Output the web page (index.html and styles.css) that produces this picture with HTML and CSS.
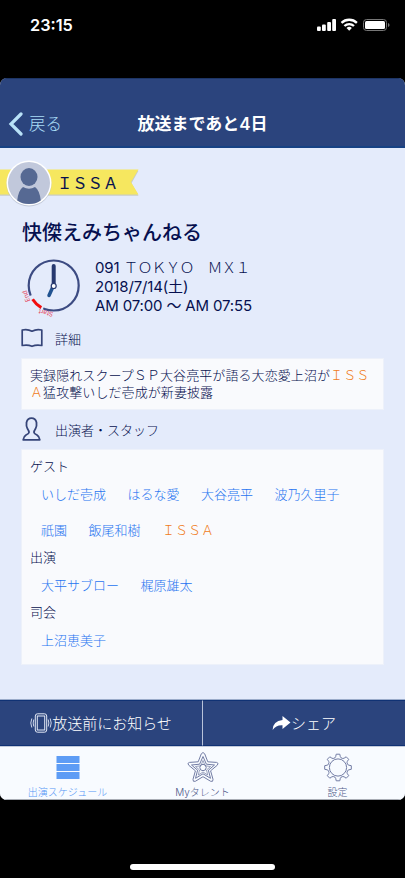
FILE: index.html
```html
<!DOCTYPE html>
<html lang="ja">
<head>
<meta charset="utf-8">
<title>放送まであと4日</title>
<link rel="stylesheet" href="styles.css">
</head>
<body>
<header class="status">
  <span class="time">23:15</span>
  <svg class="status-icons" width="74" height="16" viewBox="0 0 74 16">
    <g fill="#fff">
      <rect x="0" y="9.500" width="3.800" height="4.500" rx="1"/>
      <rect x="5" y="7.500" width="3.800" height="6.500" rx="1"/>
      <rect x="10.200" y="5" width="3.800" height="9" rx="1"/>
      <rect x="15.200" y="2" width="3.800" height="12" rx="1"/>
      <path d="M32.200 13.800l-2.700-2.900a4 4 0 0 1 5.400 0z"/>
    </g>
    <g fill="none" stroke="#fff" stroke-width="2.300">
      <path d="M24.500 5.900a11 11 0 0 1 15.400 0"/>
      <path d="M27.400 9a7 7 0 0 1 9.600 0"/>
    </g>
    <rect x="46.500" y="2.500" width="23" height="11" rx="3" fill="none" stroke="#777"/>
    <rect x="48" y="4" width="20" height="8" rx="1.500" fill="#fff"/>
    <path d="M71 6v4q1.600-.6 1.600-2t-1.600-2z" fill="#777"/>
  </svg>
</header>
<main class="app">
  <nav class="navbar">
    <a class="back">
      <svg width="15" height="24" viewBox="0 0 15 24"><path d="M13 2L3 12l10 10" fill="none" stroke="#b9e2f8" stroke-width="3.200" stroke-linecap="round"/></svg>
      <span>戻る</span>
    </a>
    <h1>放送まであと4日</h1>
  </nav>
  <section class="content">
    <div class="talent">
      <svg class="ribbon" width="142" height="30" viewBox="0 0 142 30"><path d="M0 2H138.500L131.500 14.500L138.500 27H0z" fill="#c9cdc4" transform="translate(0 .8)"/><path d="M0 1.500H138.500L131 14L138.500 26.500H0z" fill="#f6e75f"/></svg>
      <svg class="avatar" width="48" height="48" viewBox="0 0 48 48">
        <circle cx="24" cy="25" r="22.500" fill="#a9b0c2" opacity=".6"/>
        <circle cx="24" cy="24" r="22.500" fill="#fff"/>
        <circle cx="24" cy="24" r="21" fill="#c1c8db"/>
        <ellipse cx="24" cy="18" rx="8.500" ry="9" fill="#566993"/>
        <path d="M18 28q6 3.500 12 0q4.500 3 5.800 13.500q-5 3.500-11.800 3.500t-11.800-3.500Q13.500 31 18 28z" fill="#566993"/>
      </svg>
      <span class="talent-name">ＩＳＳＡ</span>
    </div>
    <h2>快傑えみちゃんねる</h2>
    <div class="schedule">
      <svg width="66" height="66" viewBox="0 0 66 66">
        <circle cx="34.700" cy="33.500" r="25" fill="none" stroke="#3c4b82" stroke-width="2.200"/>
        <path d="M11.800 43.500A25 25 0 0 0 24.300 56.200" fill="none" stroke="#e4ebfb" stroke-width="4"/>
        <path d="M13.600 47.200A25.500 25.500 0 0 0 22.300 55.600" fill="none" stroke="#f20d0d" stroke-width="3"/>
        <path d="M34.500 33.500L30 43.500" stroke="#215391" stroke-width="3.500" stroke-linecap="round"/>
        <path d="M34.700 33V14" stroke="#26386f" stroke-width="4" stroke-linecap="round"/>
        <circle cx="34.700" cy="34" r="2.500" fill="#fff" stroke="#26386f" stroke-width="1.200"/>
        <text class="mark" transform="translate(34.500 60.300) rotate(193)">Start</text>
        <text class="mark" transform="translate(11.300 49) rotate(250)">End</text>
      </svg>
      <div class="lines">
        <p>091 <span class="wide">ＴＯＫＹＯ　ＭＸ１</span></p>
        <p class="date">2018/7/14(土)</p>
        <p class="hours">AM 07:00 〜 AM 07:55</p>
      </div>
    </div>
    <h3 class="detail-head">
      <svg width="22" height="20" viewBox="0 0 22 20"><path d="M11 3.200Q6.500.7 1.200 2V17.500Q6.500 16.300 11 18.300Q15.500 16.300 20.800 17.500V2Q15.500.7 11 3.200z" fill="none" stroke="#364579" stroke-width="1.700" stroke-linejoin="round"/></svg>
      <span>詳細</span>
    </h3>
    <p class="card detail">実録隠れスクープＳＰ大谷亮平が語る大恋愛上沼が<em>ＩＳＳＡ</em>猛攻撃いしだ壱成が新妻披露</p>
    <h3 class="cast-head">
      <svg width="22" height="26" viewBox="0 0 22 26"><path d="M2.200 23.800H18.800Q18.500 20.500 16 19Q13 17.500 13 16.500Q13 15 14.500 12.800Q16 10 15.500 6.500Q14.500 2.200 10.500 2.200T5.500 6.500Q5 10 6.500 12.800Q8 15 8 16.500Q8 17.500 5 19Q2.500 20.500 2.200 23.800z" fill="none" stroke="#364579" stroke-width="1.800" stroke-linejoin="round"/></svg>
      <span>出演者・スタッフ</span>
    </h3>
    <div class="card cast">
      <h4>ゲスト</h4>
      <ul><li>いしだ壱成</li><li>はるな愛</li><li>大谷亮平</li><li>波乃久里子</li></ul>
      <ul class="second"><li>祇園</li><li>飯尾和樹</li><li class="hit">ＩＳＳＡ</li></ul>
      <h4>出演</h4>
      <ul><li>大平サブロー</li><li>梶原雄太</li></ul>
      <h4>司会</h4>
      <ul><li>上沼恵美子</li></ul>
    </div>
  </section>
  <div class="actions">
    <button>
      <svg width="22" height="20" viewBox="0 0 22 20" fill="none" stroke="#e2e8f6"><rect x="5.300" y=".8" width="11.400" height="18.400" rx="2.200" stroke-width="1"/><rect x="7.300" y="3" width="7.400" height="14" stroke-width="1"/><path d="M3.800 6.500q-1.300 3.500 0 7M1.800 5.500q-2 4.500 0 9M18.200 6.500q1.300 3.500 0 7M20.200 5.500q2 4.500 0 9" stroke-width=".9"/></svg><span>放送前にお知らせ</span>
    </button>
    <button>
      <svg width="19" height="16" viewBox="0 0 19 16"><path d="M10.500 1L18.500 7.500L10.500 14V10.200Q4 9.800.6 15Q1 5.800 10.500 5z" fill="#fff"/></svg><span>シェア</span>
    </button>
  </div>
  <footer class="tabs">
    <a class="tab active">
      <svg width="32" height="32" viewBox="0 0 32 32" fill="#5d9cf5"><rect x="4.500" y="4" width="23" height="7"/><rect x="4.500" y="12" width="23" height="7"/><rect x="4.500" y="20" width="23" height="7"/></svg>
      <span>出演スケジュール</span>
    </a>
    <a class="tab">
      <svg width="32" height="32" viewBox="0 0 32 32" fill="none" stroke="#727ca4" stroke-width="1" stroke-linejoin="round"><path d="M14.300 1.800Q16 -.8 17.700 1.800L20.800 9.800L29.500 10.400Q32.300 11 30.200 13.300L23.600 18.800L26 27.300Q26.300 30.200 23.700 29.300L16 24.700L8.300 29.300Q5.700 30.200 6 27.300L8.400 18.800L1.800 13.300Q-.3 11 2.500 10.400L11.200 9.800z"/><path d="M16 4.500L19.400 12.200L27.500 13L21.400 18.200L23.500 26.300L16 21.800L8.500 26.300L10.600 18.200L4.500 13L12.600 12.200z"/><path d="M16 8.500L18.200 13.800L23.500 14.500L19.500 18L20.700 23L16 20L11.300 23L12.500 18L8.500 14.500L13.800 13.800z" stroke-width=".7"/><circle cx="16" cy="15.500" r="3.200"/></svg>
      <span>Myタレント</span>
    </a>
    <a class="tab">
      <svg width="32" height="32" viewBox="0 0 32 32" fill="none" stroke="#727ca4" stroke-width="1" stroke-linejoin="round"><circle cx="16" cy="15.500" r="8.600"/><path d="M13 5.800L13.700 4.600L14.200 2.200H17.800L18.300 4.600L19 5.800L20.800 6.500L22.100 6.200L24.200 4.800L26.700 7.300L25.300 9.400L25 10.700L25.700 12.500L26.900 13.200L29.300 13.700V17.300L26.900 17.800L25.700 18.500L25 20.300L25.300 21.600L26.700 23.700L24.200 26.200L22.100 24.800L20.800 24.500L19 25.200L18.300 26.400L17.800 28.800H14.200L13.700 26.400L13 25.200L11.200 24.500L9.900 24.800L7.800 26.200L5.300 23.700L6.700 21.600L7 20.300L6.300 18.500L5.100 17.800L2.700 17.300V13.700L5.100 13.200L6.300 12.500L7 10.700L6.700 9.400L5.300 7.300L7.800 4.800L9.900 6.200L11.200 6.500z"/></svg>
      <span>設定</span>
    </a>
  </footer>
</main>
<div class="home"></div>
</body>
</html>
```
FILE: styles.css
```css
* { box-sizing: border-box; margin: 0; padding: 0; }
body {
  width: 405px;
  height: 878px;
  background: #000;
  font-family: Inter, "Noto Sans CJK JP", sans-serif;
  font-weight: 300;
  display: flex;
  flex-direction: column;
  overflow: hidden;
}
svg { display: block; flex: none; }
.status {
  height: 78px;
  padding: 15px 14px 0 30px;
  display: flex;
  justify-content: space-between;
  align-items: flex-start;
}
.time { color: #fff; font-size: 16.3px; font-weight: 600; line-height: 21px; }
.status-icons { margin-top: 2px; }
.app {
  height: 722px;
  background: #e4ebfb;
  border-radius: 7px;
  overflow: hidden;
  display: flex;
  flex-direction: column;
}
.navbar {
  height: 70px;
  flex: none;
  background: #2b447d;
  border-top: 1px solid #1d3566;
  border-bottom: 2px solid #174284;
  display: grid;
  grid-template-columns: 1fr auto 1fr;
  align-items: center;
  padding: 23px 8px 0;
  line-height: 24px;
}
.back { display: flex; align-items: center; gap: 6px; color: #a9dcf8; font-size: 16.5px; }
.navbar h1 { color: #fff; font-size: 17px; font-weight: 600; }
.content { flex: 1; min-height: 0; padding: 0 21px; color: #06104f; }
.talent { position: relative; height: 60px; margin: 0 -21px; padding-left: 57px; display: flex; align-items: center; }
.ribbon { position: absolute; left: 0; top: 20px; }
.avatar { position: absolute; left: 4.5px; top: 11px; }
.talent-name { position: relative; margin-top: 12px; font-size: 15.3px; font-weight: 400; line-height: 20px; -webkit-text-stroke: .1px #06104f; }
h2 { margin-top: 10px; padding-left: 1px; font-size: 20px; font-weight: 500; line-height: 30px; }
.schedule { display: flex; gap: 7px; margin-top: 4px; height: 70px; }
.schedule svg { margin-left: -2px; }
.mark { fill: #e5455c; font-size: 6.5px; font-weight: 400; }
.lines { margin-left: 3px; padding-top: 6px; font-size: 15px; font-weight: 400; letter-spacing: -.15px; }
.lines p { height: 19px; line-height: 19px; white-space: nowrap; }
.wide { letter-spacing: -1px; font-weight: 300; }
h3 { display: flex; align-items: center; gap: 12px; font-size: 13px; font-weight: 300; }
.detail-head { height: 22px; margin-top: 5px; }
.card { background: #f9fafd; border: 1px solid #edf1fa; }
.detail { margin-top: 9px; height: 52px; padding: 8px 6px 0 8px; font-size: 13px; line-height: 17px; letter-spacing: .08px; word-break: break-all; line-break: anywhere; }
em { font-style: normal; color: #f07a20; }
.cast-head { height: 26px; margin-top: 6px; }
.cast { margin-top: 7px; height: 216px; padding: 3px 8px 0; font-size: 13px; }
h4 { font-size: 13px; font-weight: 300; height: 27px; line-height: 27px; }
.cast ul { list-style: none; display: flex; gap: 21.5px; padding-left: 11px; height: 28px; line-height: 28px; color: #2674f0; }
.cast .second { margin-top: 8px; }
.cast .hit { color: #f07a20; }
.actions { height: 47px; flex: none; display: grid; grid-template-columns: 202px 1fr; border-top: 1px solid #9bacca; }
.actions button {
  border: 0;
  border-top: 1px solid #103274;
  border-bottom: 1px solid #103274;
  background: #2b447d;
  color: #fff;
  font: 300 15px/24px "Noto Sans CJK JP", sans-serif;
  display: flex;
  align-items: center;
  justify-content: center;
}
.actions span { margin-top: -1px; }
.actions button + button { border-left: 1px solid #b8c3da; }
.tabs { height: 54px; flex: none; background: #f8fbff; border-top: 1px solid #c3cada; border-bottom: 1px solid #a9adb5; display: grid; grid-template-columns: repeat(3, 1fr); }
.tab { display: flex; flex-direction: column; align-items: center; padding-top: 5px; color: #4c5888; font-size: 10px; line-height: 16px; }
.active { color: #5596f5; }
.home { width: 145px; height: 6px; margin: 64px auto 0; border-radius: 3px; background: #fff; }
```
